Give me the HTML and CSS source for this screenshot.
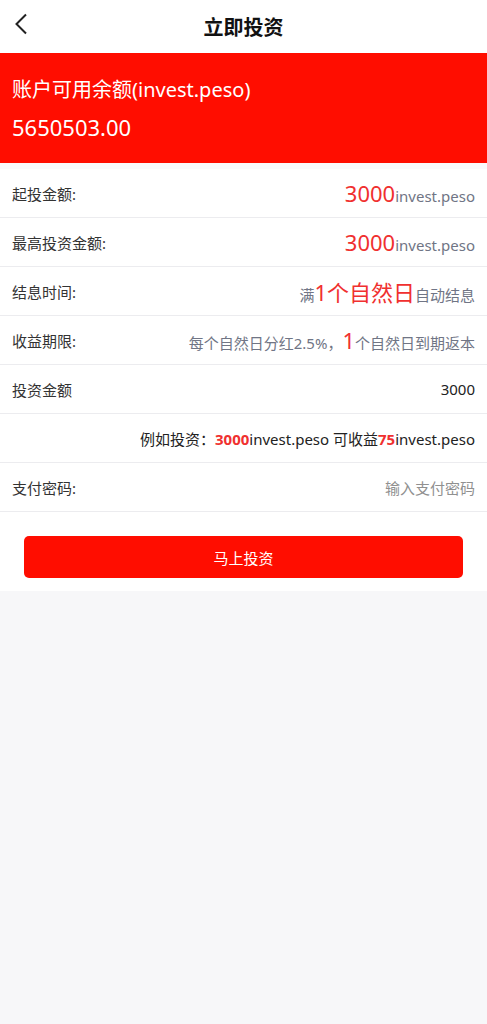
FILE: index.html
```html
<!DOCTYPE html>
<html lang="zh">
<head>
<meta charset="utf-8">
<title>立即投资</title>
<link rel="stylesheet" href="styles.css">
</head>
<body>
<div class="page">
  <header class="topbar">
    <span class="back"><svg width="14" height="22" viewBox="0 0 14 22"><path d="M12 1.5 L2.5 11 L12 20.5" fill="none" stroke="#222" stroke-width="2"/></svg></span>
    <h1 class="title">立即投资</h1>
  </header>
  <section class="banner">
    <div class="banner-label">账户可用余额(invest.peso)</div>
    <div class="banner-value">5650503.00</div>
  </section>
  <div class="gap"></div>
  <section class="list">
    <div class="row">
      <span class="label">起投金额:</span>
      <span class="value"><em class="big">3000</em><span class="unit">invest.peso</span></span>
    </div>
    <div class="row">
      <span class="label">最高投资金额:</span>
      <span class="value"><em class="big">3000</em><span class="unit">invest.peso</span></span>
    </div>
    <div class="row">
      <span class="label">结息时间:</span>
      <span class="value muted">满<em class="big">1个自然日</em>自动结息</span>
    </div>
    <div class="row">
      <span class="label">收益期限:</span>
      <span class="value muted">每个自然日分红2.5%，<em class="big">1</em>个自然日到期返本</span>
    </div>
    <div class="row">
      <span class="label">投资金额</span>
      <span class="value dark">3000</span>
    </div>
    <div class="row row-end">
      <span class="value dark">例如投资：<b class="hl">3000</b>invest.peso 可收益<b class="hl">75</b>invest.peso</span>
    </div>
    <div class="row">
      <span class="label">支付密码:</span>
      <span class="value placeholder">输入支付密码</span>
    </div>
  </section>
  <div class="btn-wrap">
    <button class="btn">马上投资</button>
  </div>
</div>
</body>
</html>
```
FILE: styles.css
```css
html, body {
  margin: 0;
  padding: 0;
  background: #f7f7f9;
  font-family: "Noto Sans", "Noto Sans CJK SC", sans-serif;
}
.page {
  width: 487px;
}
.topbar {
  height: 53px;
  background: #fff;
  display: flex;
  align-items: center;
  justify-content: center;
  position: relative;
}
.back {
  position: absolute;
  left: 14px;
  top: 13px;
}
.title {
  margin: 0;
  font-size: 20px;
  font-weight: 700;
  color: #111;
  font-family: "Noto Sans CJK SC", sans-serif;
}
.banner {
  height: 110px;
  background: #ff0d00;
  color: #fff;
  padding: 0 12px;
  box-sizing: border-box;
  display: flex;
  flex-direction: column;
  justify-content: center;
  gap: 8px;
}
.banner-label {
  font-size: 20px;
  line-height: 28px;
  margin-top: 2px;
}
.banner-value {
  font-size: 22px;
  line-height: 30px;
}
.gap {
  height: 6px;
  background: #fafafc;
}
.list {
  background: #fff;
}
.row {
  height: 48px;
  border-bottom: 1px solid #ececef;
  display: flex;
  align-items: center;
  justify-content: space-between;
  padding: 0 12px;
  font-size: 15px;
  color: #333;
}
.row-end {
  justify-content: flex-end;
}
.label {
  color: #333;
}
.value {
  display: flex;
  align-items: baseline;
}
.big {
  font-style: normal;
  font-size: 22px;
  color: #f0302f;
}
.unit {
  color: #707585;
  font-size: 15px;
}
.muted {
  color: #707585;
}
.dark {
  color: #222;
}
.hl {
  color: #f0302f;
  font-weight: 700;
}
.placeholder {
  color: #909090;
}
.btn-wrap {
  background: #fff;
  padding: 24px 24px 12px;
  height: 79px;
  box-sizing: border-box;
}
.btn {
  display: block;
  width: 439px;
  height: 42px;
  border: none;
  border-radius: 5px;
  background: #ff0d00;
  color: #fff;
  font-size: 15px;
  font-family: "Noto Sans CJK SC", sans-serif;
}
```
